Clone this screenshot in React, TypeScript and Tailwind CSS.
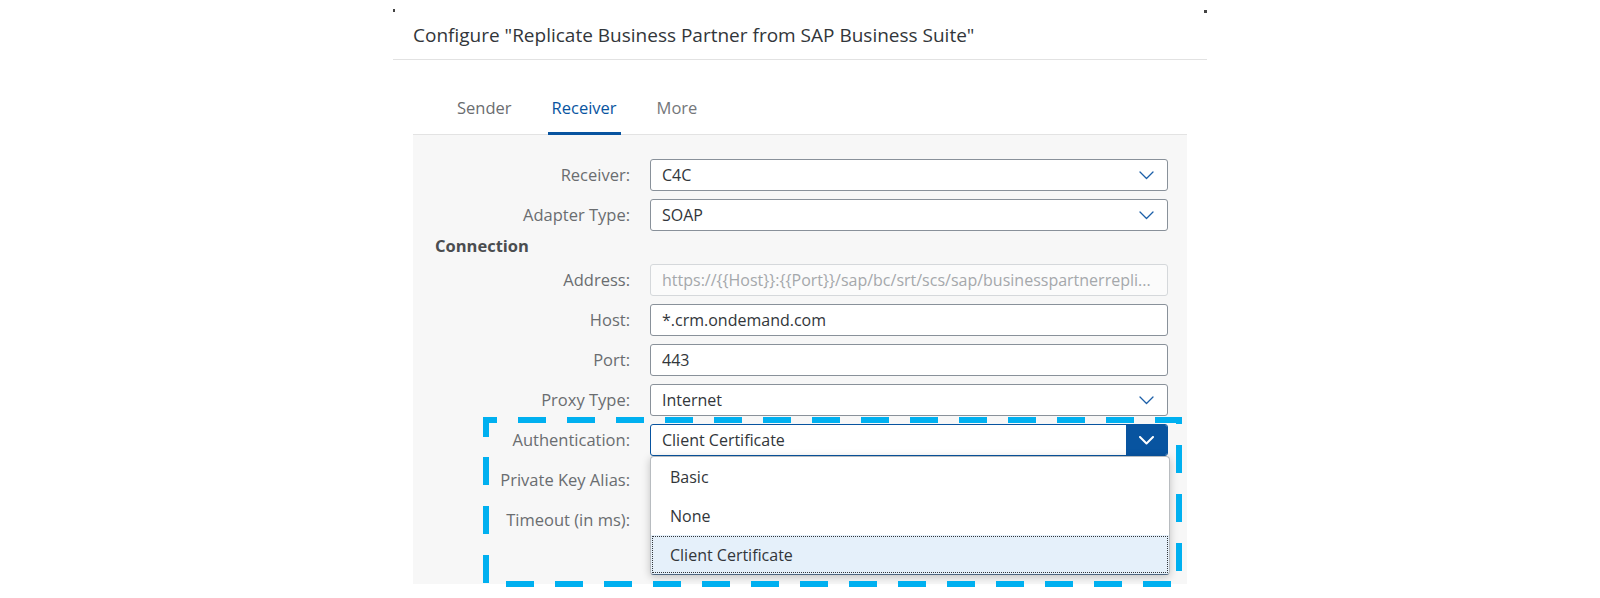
import type { ReactNode } from "react";

const FONT = "font-['Open_Sans','Noto_Sans',sans-serif]";

function Chevron({ white }: { white?: boolean }) {
  return (
    <svg width="15" height="9" viewBox="0 0 15 9" fill="none">
      <path
        d="M1 1 L7.5 7.5 L14 1"
        stroke={white ? "#ffffff" : "#1c5fa8"}
        strokeWidth={white ? 2 : 1.3}
        strokeLinecap="round"
        strokeLinejoin="round"
      />
    </svg>
  );
}

function Row({ label, children }: { label: string; children?: ReactNode }) {
  return (
    <div className="flex h-[32px] items-center">
      <div className="w-[217px] shrink-0 text-right text-[16.5px] leading-[24px] text-[#6a6d70]">
        {label}
      </div>
      <div className="ml-[20px] h-full w-[518px] shrink-0">{children}</div>
    </div>
  );
}

function Field({
  value,
  select,
  disabled,
}: {
  value?: string;
  select?: boolean;
  disabled?: boolean;
}) {
  return (
    <div
      className={`flex h-full items-center overflow-hidden rounded-[3px] border pl-[11px] pr-[11px] ${
        disabled
          ? "border-[#d5d8db] bg-[#fbfbfb] text-[#a5a8ab]"
          : "border-[#89919a] bg-white text-[#32363a]"
      }`}
    >
      <span className="min-w-0 flex-1 overflow-hidden whitespace-nowrap text-[16px] leading-[24px]">
        {value}
      </span>
      {select ? (
        <span className="ml-2 flex w-[20px] shrink-0 justify-center">
          <Chevron />
        </span>
      ) : null}
    </div>
  );
}

function AuthSelect() {
  const items = ["Basic", "None", "Client Certificate"];
  return (
    <div className="relative h-full">
      <div className="flex h-full items-stretch overflow-hidden rounded-[3px] border border-[#0854a0] bg-white text-[#32363a]">
        <span className="flex flex-1 items-center pl-[11px] text-[16px] leading-[24px]">
          Client Certificate
        </span>
        <span className="flex w-[41px] items-center justify-center bg-[#0854a0]">
          <Chevron white />
        </span>
      </div>
      <div className="absolute left-0 top-full z-10 w-[520px] overflow-hidden rounded-[4px] border border-[#b8bcc0] border-b-[#4e6680] bg-white shadow-[0_2px_8px_rgba(0,0,0,0.22)]">
        {items.map((it, i) => (
          <div
            key={it}
            className={`flex h-[39px] items-center pl-[19px] text-[16px] leading-[24px] text-[#32363a] ${
              i === items.length - 1
                ? "bg-[#e5f0fa] outline-1 outline-dotted outline-[#32363a] -outline-offset-2"
                : ""
            }`}
          >
            {it}
          </div>
        ))}
      </div>
    </div>
  );
}

export default function App() {
  return (
    <div className={`relative h-[598px] w-full overflow-hidden bg-white ${FONT}`}>
      <div className="ml-[393px] w-[814px] pt-[9px]">
        {/* header */}
        <div className="border-b border-[#e2e2e2] pb-[11px]">
          <div className="flex h-[3px] justify-between">
            <span className="h-[3px] w-[2px] bg-[#444]" />
            <span className="mt-[1px] h-[3px] w-[3px] bg-[#444]" />
          </div>
          <div className="mt-[10px] pl-[20px] text-[19px] leading-[26px] text-[#32363a]">
            Configure "Replicate Business Partner from SAP Business Suite"
          </div>
        </div>

        {/* tabs */}
        <div className="mx-[20px] flex h-[75px] items-end gap-[32px] border-b border-[#e3e3e3] pl-[40px]">
          <div className="-mb-px border-b-[3px] border-transparent px-[4px] pb-[12px] text-[16.5px] leading-[24px] text-[#6a6d70]">
            Sender
          </div>
          <div className="-mb-px rounded-t-[2px] border-b-[3px] border-[#0854a0] px-[4px] pb-[12px] text-[16.5px] leading-[24px] text-[#0854a0]">
            Receiver
          </div>
          <div className="-mb-px border-b-[3px] border-transparent px-[4px] pb-[12px] text-[16.5px] leading-[24px] text-[#74777a]">
            More
          </div>
        </div>

        {/* form */}
        <div className="mx-[20px] flex h-[449px] flex-col gap-[8px] bg-[#f7f7f7] pt-[24px]">
          <Row label="Receiver:">
            <Field value="C4C" select />
          </Row>
          <Row label="Adapter Type:">
            <Field value="SOAP" select />
          </Row>
          <div className="flex h-[17px] items-start pl-[22px] text-[16.5px] font-bold leading-[13px] text-[#4a4d50]">
            Connection
          </div>
          <Row label="Address:">
            <Field
              value="https://{{Host}}:{{Port}}/sap/bc/srt/scs/sap/businesspartnerrepli..."
              disabled
            />
          </Row>
          <Row label="Host:">
            <Field value="*.crm.ondemand.com" />
          </Row>
          <Row label="Port:">
            <Field value="443" />
          </Row>
          <Row label="Proxy Type:">
            <Field value="Internet" select />
          </Row>
          <Row label="Authentication:">
            <AuthSelect />
          </Row>
          <Row label="Private Key Alias:">
            <Field value="" />
          </Row>
          <Row label="Timeout (in ms):">
            <Field value="" />
          </Row>
        </div>
      </div>

      {/* dashed annotation */}
      <svg
        className="pointer-events-none absolute left-0 top-0 z-20"
        width="1600"
        height="598"
        viewBox="0 0 1600 598"
        fill="none"
      >
        <path
          d="M486 437 L486 420 L1179 420 L1179 584 L486 584 Z"
          stroke="#00b0f0"
          strokeWidth="6"
          strokeDasharray="28 21"
          strokeLinecap="butt"
          strokeLinejoin="miter"
        />
      </svg>
    </div>
  );
}
